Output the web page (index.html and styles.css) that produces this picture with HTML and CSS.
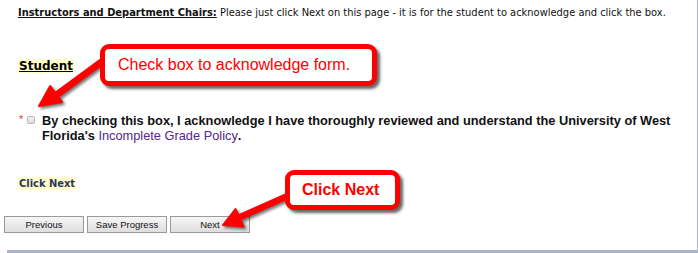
FILE: index.html
```html
<!DOCTYPE html>
<html>
<head>
<meta charset="utf-8">
<link rel="stylesheet" href="styles.css">
</head>
<body>
<div class="page">
  <p class="intro"><span class="intro-label">Instructors and Department Chairs:</span> Please just click Next on this page - it is for the student to acknowledge and click the box.</p>
  <h2 class="section"><span class="hl">Student</span></h2>
  <div class="ack">
    <span class="req">*</span>
    <span class="cb"></span>
    <p class="ack-text">By checking this box, I acknowledge I have thoroughly reviewed and understand the University of West Florida's <a class="link" href="#">Incomplete Grade Policy</a>.</p>
  </div>
  <div class="next-label"><span class="hl hl-navy">Click Next</span></div>
  <div class="buttons">
    <button class="btn">Previous</button>
    <button class="btn">Save Progress</button>
    <button class="btn">Next</button>
  </div>
  <div class="bottom-bar"></div>

  <svg class="arrows" width="698" height="253" viewBox="0 0 698 253">
    <g fill="#ff0000" stroke="#ff0000" stroke-linejoin="round">
      <line x1="104" y1="60" x2="55" y2="96" stroke-width="7"/>
      <polygon points="39,106 50.2,86 62,102" stroke-width="2"/>
      <line x1="292" y1="194" x2="238" y2="218" stroke-width="6.5"/>
      <polygon points="223,225 235.5,209 243.5,226.5" stroke-width="2"/>
    </g>
  </svg>
  <div class="callout callout-check">Check box to acknowledge form.</div>
  <div class="callout callout-next">Click Next</div>
</div>
</body>
</html>
```
FILE: styles.css
```css
html, body {
  margin: 0;
  padding: 0;
  background: #ffffff;
}
.page {
  position: relative;
  width: 697px;
  height: 253px;
  border-right: 1px solid #a9b4c6;
  overflow: hidden;
  font-family: "DejaVu Sans Condensed", "DejaVu Sans", sans-serif;
}
.intro {
  margin: 0;
  padding: 6px 0 0 18px;
  font-size: 11px;
  line-height: 13px;
  color: #111;
  white-space: nowrap;
}
.intro-label {
  font-weight: bold;
  text-decoration: underline;
}
.section {
  margin: 40px 0 0 18px;
  font-family: "DejaVu Sans", sans-serif;
  font-size: 12px;
  line-height: 15px;
  font-weight: bold;
}
.hl {
  background: #ffffcc;
  text-decoration: underline;
  color: #000;
  padding: 0 1px;
}
.hl-navy {
  text-decoration: none;
  color: #2e3560;
}
.ack {
  display: flex;
  align-items: flex-start;
  margin: 39px 0 0 19px;
}
.req {
  color: #d04040;
  font-family: "Liberation Sans", Arial, sans-serif;
  font-size: 11px;
  line-height: 13px;
  width: 8px;
}
.cb {
  width: 6px;
  height: 6px;
  margin-top: 3px;
  border: 1px solid #b8b8b8;
  border-radius: 2px;
  background: linear-gradient(#f2f2f2, #dcdcdc);
}
.ack-text {
  margin: 0 0 0 7px;
  width: 640px;
  font-family: "Liberation Sans", Arial, sans-serif;
  font-weight: bold;
  font-size: 12.8px;
  line-height: 15px;
  color: #111;
}
.link {
  color: #55278f;
  font-weight: normal;
  text-decoration: none;
}
.next-label {
  margin: 34px 0 0 18px;
  font-size: 11px;
  line-height: 13px;
  font-weight: bold;
}
.buttons {
  display: flex;
  gap: 3px;
  margin: 26px 0 0 4px;
}
.btn {
  width: 80px;
  height: 17px;
  padding: 0;
  border: 1px solid #9a9a9a;
  background: linear-gradient(#f6f6f6, #dedede);
  font-family: "Liberation Sans", Arial, sans-serif;
  font-size: 9.5px;
  color: #111;
}
.bottom-bar {
  position: absolute;
  left: 7px;
  right: 0;
  bottom: 0;
  height: 3px;
  background: #a9b4c6;
}
.arrows {
  position: absolute;
  left: 0;
  top: 0;
  filter: drop-shadow(2px 2px 1.5px rgba(0,0,0,0.55));
}
.callout {
  position: absolute;
  box-sizing: border-box;
  border: 5px solid #ff0000;
  border-radius: 9px;
  background: #fff;
  color: #ff0000;
  font-family: "Liberation Sans", Arial, sans-serif;
  font-size: 16px;
  box-shadow: 3px 3px 3px rgba(0,0,0,0.6);
  display: flex;
  align-items: center;
}
.callout-check {
  left: 100px;
  top: 44px;
  width: 277px;
  height: 42px;
  padding-left: 13px;
}
.callout-next {
  left: 285px;
  top: 170px;
  width: 115px;
  height: 40px;
  padding-left: 12px;
  font-weight: bold;
}
```
